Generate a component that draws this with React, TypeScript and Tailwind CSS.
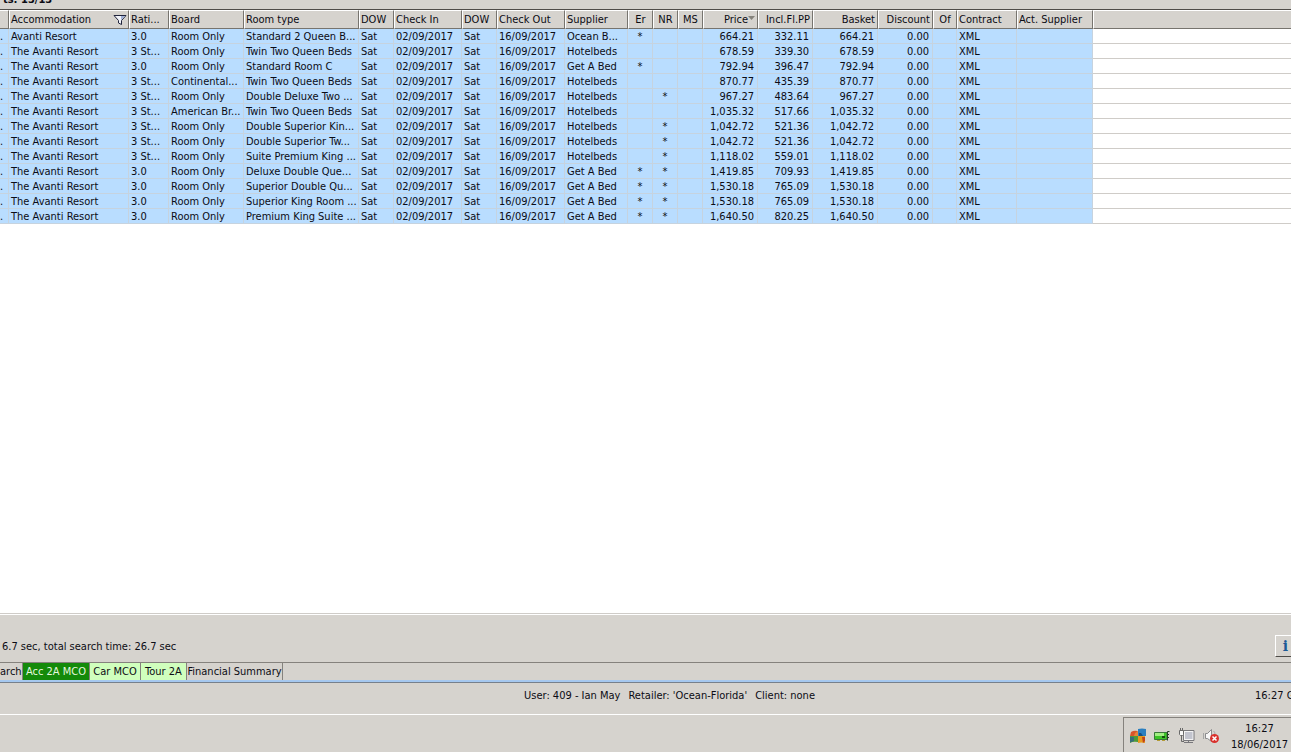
import { useState } from "react";

type Align = "left" | "center" | "right";

type Column = {
  name: string;
  width: string;
  align: Align;
};

const columns: Column[] = [
  { name: "", width: "w-[9px]", align: "left" },
  { name: "Accommodation", width: "w-[120px]", align: "left" },
  { name: "Rati...", width: "w-[40px]", align: "left" },
  { name: "Board", width: "w-[75px]", align: "left" },
  { name: "Room type", width: "w-[115px]", align: "left" },
  { name: "DOW", width: "w-[35px]", align: "left" },
  { name: "Check In", width: "w-[68px]", align: "left" },
  { name: "DOW", width: "w-[35px]", align: "left" },
  { name: "Check Out", width: "w-[68px]", align: "left" },
  { name: "Supplier", width: "w-[63px]", align: "left" },
  { name: "Er", width: "w-[25px]", align: "center" },
  { name: "NR", width: "w-[25px]", align: "center" },
  { name: "MS", width: "w-[25px]", align: "center" },
  { name: "Price", width: "w-[55px]", align: "right" },
  { name: "Incl.Fl.PP", width: "w-[55px]", align: "right" },
  { name: "Basket", width: "w-[65px]", align: "right" },
  { name: "Discount", width: "w-[55px]", align: "right" },
  { name: "Of", width: "w-[24px]", align: "center" },
  { name: "Contract", width: "w-[60px]", align: "left" },
  { name: "Act. Supplier", width: "w-[76px]", align: "left" },
];

// name, rating, board, room, supplier, errata, non-refundable, price, per person
const offers = [
  ["Avanti Resort", "3.0", "Room Only", "Standard 2 Queen B...", "Ocean B...", "*", "", "664.21", "332.11"],
  ["The Avanti Resort", "3 St...", "Room Only", "Twin Two Queen Beds", "Hotelbeds", "", "", "678.59", "339.30"],
  ["The Avanti Resort", "3.0", "Room Only", "Standard Room C", "Get A Bed", "*", "", "792.94", "396.47"],
  ["The Avanti Resort", "3 St...", "Continental...", "Twin Two Queen Beds", "Hotelbeds", "", "", "870.77", "435.39"],
  ["The Avanti Resort", "3 St...", "Room Only", "Double Deluxe Two ...", "Hotelbeds", "", "*", "967.27", "483.64"],
  ["The Avanti Resort", "3 St...", "American Br...", "Twin Two Queen Beds", "Hotelbeds", "", "", "1,035.32", "517.66"],
  ["The Avanti Resort", "3 St...", "Room Only", "Double Superior Kin...", "Hotelbeds", "", "*", "1,042.72", "521.36"],
  ["The Avanti Resort", "3 St...", "Room Only", "Double Superior Tw...", "Hotelbeds", "", "*", "1,042.72", "521.36"],
  ["The Avanti Resort", "3 St...", "Room Only", "Suite Premium King ...", "Hotelbeds", "", "*", "1,118.02", "559.01"],
  ["The Avanti Resort", "3.0", "Room Only", "Deluxe Double Que...", "Get A Bed", "*", "*", "1,419.85", "709.93"],
  ["The Avanti Resort", "3.0", "Room Only", "Superior Double Qu...", "Get A Bed", "*", "*", "1,530.18", "765.09"],
  ["The Avanti Resort", "3.0", "Room Only", "Superior King Room ...", "Get A Bed", "*", "*", "1,530.18", "765.09"],
  ["The Avanti Resort", "3.0", "Room Only", "Premium King Suite ...", "Get A Bed", "*", "*", "1,640.50", "820.25"],
];

const rows = offers.map(([name, rating, board, room, supplier, er, nr, price, pp]) => [
  ".", name, rating, board, room, "Sat", "02/09/2017", "Sat", "16/09/2017", supplier,
  er, nr, "", price, pp, price, "0.00", "", "XML", "",
]);

const headAlign = {
  left: "justify-start pl-px",
  center: "justify-center",
  right: "justify-end pr-[2px]",
};

const cellAlign = {
  left: "text-left pl-[2px]",
  center: "text-center",
  right: "text-right pr-[3px]",
};

const FilterIcon = () => (
  <svg width="14" height="12" viewBox="0 0 14 12" className="shrink-0">
    <path d="M1 1.5H13L8.5 6.5V10.5L5.5 9V6.5Z" fill="#f2f4fa" stroke="#20243c" />
    <path d="M8 6L12 2H8Z" fill="#9fb0d8" />
  </svg>
);

const SortIcon = () => (
  <svg width="7" height="4" viewBox="0 0 7 4" className="mb-1 shrink-0">
    <path d="M0 0H7L3.5 4Z" fill="#85827b" />
  </svg>
);

const ResultsTable = () => (
  <table className="w-full table-fixed border-separate border-spacing-0">
    <colgroup>
      {columns.map((col, i) => (
        <col key={i} className={col.width} />
      ))}
      <col />
    </colgroup>
    <thead>
      <tr className="bg-[#d6d3ce]">
        {columns.map((col, i) => (
          <th
            key={i}
            className={`h-[19px] border-t border-r border-b border-t-white border-r-[#77746e] border-b-[#77746e] p-0 font-normal ${
              i === 0 ? "" : "border-l border-l-white"
            }`}
          >
            <button
              type="button"
              aria-label={col.name || "Resort"}
              className={`flex h-[17px] w-full items-center overflow-hidden pt-px whitespace-nowrap ${headAlign[col.align]}`}
            >
              {col.name}
              {col.name === "Accommodation" && (
                <span className="ml-auto pr-px">
                  <FilterIcon />
                </span>
              )}
              {col.name === "Price" && <SortIcon />}
            </button>
          </th>
        ))}
        <td className="border-t border-b border-l border-t-white border-b-[#77746e] border-l-white p-0" />
      </tr>
    </thead>
    <tbody>
      {rows.map((row, r) => (
        <tr key={r}>
          {row.map((value, c) => (
            <td
              key={c}
              className={`h-[15px] overflow-hidden border-r border-b border-[#c6d3df] bg-[#b9ddff] pt-px pb-0 leading-[13px] whitespace-nowrap ${
                c === 0 ? "pl-0 text-left" : cellAlign[columns[c].align]
              }`}
            >
              {value}
            </td>
          ))}
          <td className="border-b border-[#cfccc8] p-0" />
        </tr>
      ))}
    </tbody>
  </table>
);

const Tabs = () => {
  const [active, setActive] = useState("Acc 2A MCO");
  const tabs = [
    { name: "arch", width: "w-[23px]", color: "" },
    { name: "Acc 2A MCO", width: "w-[67px]", color: "bg-[#d0ffbd]" },
    { name: "Car MCO", width: "w-[51px]", color: "bg-[#d0ffbd]" },
    { name: "Tour 2A", width: "w-[46px]", color: "bg-[#d0ffbd]" },
    { name: "Financial Summary", width: "w-[96px]", color: "" },
  ];

  return (
    <nav className="flex h-[18px] border-t border-[#85827d]">
      {tabs.map((tab) => (
        <button
          key={tab.name}
          type="button"
          onClick={() => setActive(tab.name)}
          className={`${tab.width} flex items-center border-r border-[#85827d] whitespace-nowrap ${
            tab.name === "arch" ? "justify-start" : "justify-center"
          } ${active === tab.name ? "bg-[#148a0a] text-[#e6f8df]" : tab.color}`}
        >
          {tab.name}
        </button>
      ))}
    </nav>
  );
};

const WindowsIcon = () => (
  <svg width="16" height="16" viewBox="0 0 16 16">
    <path d="M1 4Q4 2 7.5 3L8 8H0Z" fill="#d9552b" />
    <path d="M8 1Q12 0 16 1V8H8Z" fill="#2b7fc0" />
    <path d="M0 8H8V14Q3 13 0 15Z" fill="#4d9a3a" />
    <path d="M8 8H15V15Q11 14 8 15Z" fill="#e79a1e" />
    <path d="M0 9H4V13L0 14.5Z" fill="#376d7b" />
    <path d="M5 5L8 3V8H4Z" fill="#e8843a" />
    <path d="M9 5H11L13 8H9Z" fill="#174f83" />
    <path d="M12 9H15V13L13 15Z" fill="#c24419" />
  </svg>
);

const CardIcon = () => (
  <svg width="16" height="12" viewBox="0 0 16 12">
    <path d="M0.5 2.5H13V9.5H0.5Z" fill="#3cc527" stroke="#39773a" />
    <path d="M1 3H10V6H1Z" fill="#a2ee83" />
    <path d="M8 6H11V8H8Z" fill="#14520f" />
    <path d="M15.5 1.5H13.5V10.5M13 4.5H15M13 7.5H15" fill="none" stroke="#263c27" />
    <path d="M3 10.5H6M8 10.5H11" stroke="#b49b35" />
  </svg>
);

const NetworkIcon = () => (
  <svg width="17" height="16" viewBox="0 0 17 16">
    <path d="M5.5 2.5H16V12.5H5.5Z" fill="#f4f4f4" stroke="#77777b" />
    <path d="M7 4H14.5V11H7Z" fill="#c2c4ce" />
    <path d="M6 14.5H15M10.5 13V14" stroke="#77777b" />
    <path d="M1.5 2.5H5.5V6.5L4.5 7.5H2.5L1.5 6.5Z" fill="#f8f8f8" stroke="#696969" />
    <path d="M2.5 0V2M4.5 0V2" stroke="#696969" />
    <path d="M3.5 8V13.5H6" fill="none" stroke="#696969" />
  </svg>
);

const VolumeIcon = () => (
  <svg width="17" height="16" viewBox="0 0 17 16">
    <path d="M2.5 5.5H4.5L8.5 1.5V13.5L4.5 10.5H2.5Z" fill="#f7f7f7" stroke="#8b8b8d" />
    <path d="M0.5 5V11" stroke="#a5a5a5" />
    <path d="M10.5 3Q12 4 12 6" fill="none" stroke="#a5a5a5" />
    <circle cx="11.5" cy="10.5" r="4.5" fill="#d9302c" />
    <path d="M9.5 8.5L13.5 12.5M13.5 8.5L9.5 12.5" stroke="#fff" strokeWidth="1.5" />
  </svg>
);

const App = () => {
  return (
    <div className="flex min-h-screen flex-col overflow-hidden bg-[#d6d3ce] font-['DejaVu_Sans_Condensed','DejaVu_Sans',sans-serif] text-[11px] leading-[14px] text-[#0c0c14]">
      <div className="h-[10px] overflow-hidden border-b border-[#4f4c48]">
        <p className="-mt-[7px] pl-[3px] font-bold whitespace-nowrap">ts: 13/13</p>
      </div>

      <main className="grow border-b border-[#cfccc8] bg-white">
        <ResultsTable />
      </main>

      <div className="flex h-12 items-end justify-between border-t border-white">
        <p className="pb-2 pl-[2px]">6.7 sec, total search time: 26.7 sec</p>
        <button
          type="button"
          aria-label="Information"
          className="mb-[5px] h-[22px] w-4 border-t border-b border-l border-t-white border-b-[#4f4c48] border-l-white pl-1 font-['DejaVu_Serif',serif] text-sm font-bold text-[#1c5a96]"
        >
          i
        </button>
      </div>

      <Tabs />

      <footer>
        <div className="h-[35px] border-t-2 border-[#a6c8ef]">
          <div className="flex h-full items-start border-t border-b border-t-[#77808c] border-b-white pt-[6px] whitespace-nowrap">
            <span className="flex-1 pl-12" />
            <p className="flex gap-2">
              <span>User: 409 - Ian May</span>
              <span>Retailer: 'Ocean-Florida'</span>
              <span>Client: none</span>
            </p>
            <span className="flex flex-1 justify-end">
              <span className="w-9">16:27 G</span>
            </span>
          </div>
        </div>
        <div className="flex h-[37px] justify-end pt-[2px]">
          <div className="flex w-[168px] items-center border-t border-l border-[#85827d]">
            <div className="flex items-center gap-2 pt-[2px] pl-[6px]">
              <WindowsIcon />
              <CardIcon />
              <NetworkIcon />
              <VolumeIcon />
            </div>
            <div className="flex-1 pt-[3px] pl-2 text-center leading-4 whitespace-nowrap">
              <p>16:27</p>
              <p>18/06/2017</p>
            </div>
          </div>
        </div>
      </footer>
    </div>
  );
};

export default App;
